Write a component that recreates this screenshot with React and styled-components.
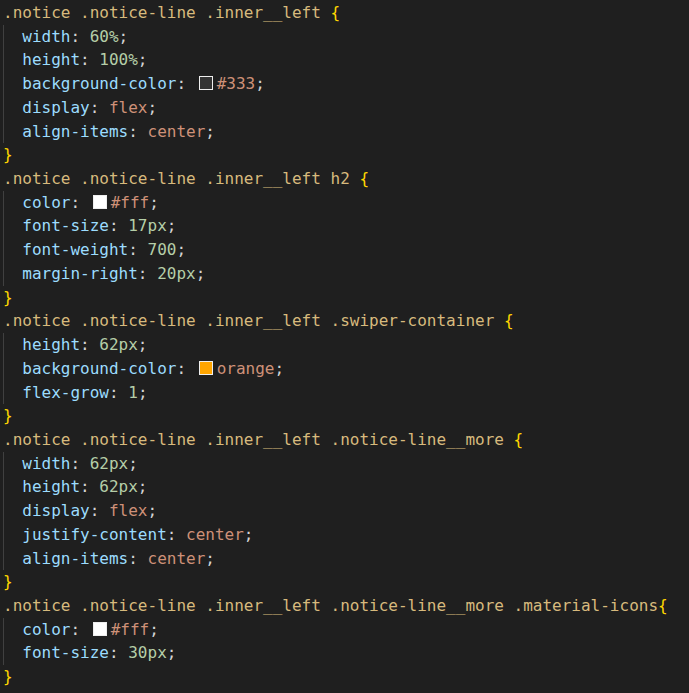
import styled, { createGlobalStyle } from "styled-components";

const GlobalStyle = createGlobalStyle`
  html, body {
    margin: 0;
    padding: 0;
    background: #1f1f1f;
  }
`;

// token colours (VS Code dark)
const colors = {
  sel: "#d7ba7d",
  prop: "#9cdcfe",
  num: "#b5cea8",
  val: "#ce9178",
  punc: "#d4d4d4",
  brace: "#ffd700",
};

const rules = [
  {
    selector: ".notice .notice-line .inner__left ",
    decls: [
      ["width", [["num", "60%"]]],
      ["height", [["num", "100%"]]],
      ["background-color", [["swatch", "#333"], ["val", "#333"]]],
      ["display", [["val", "flex"]]],
      ["align-items", [["val", "center"]]],
    ],
  },
  {
    selector: ".notice .notice-line .inner__left h2 ",
    decls: [
      ["color", [["swatch", "#fff"], ["val", "#fff"]]],
      ["font-size", [["num", "17px"]]],
      ["font-weight", [["num", "700"]]],
      ["margin-right", [["num", "20px"]]],
    ],
  },
  {
    selector: ".notice .notice-line .inner__left .swiper-container ",
    decls: [
      ["height", [["num", "62px"]]],
      ["background-color", [["swatch", "orange"], ["val", "orange"]]],
      ["flex-grow", [["num", "1"]]],
    ],
  },
  {
    selector: ".notice .notice-line .inner__left .notice-line__more ",
    decls: [
      ["width", [["num", "62px"]]],
      ["height", [["num", "62px"]]],
      ["display", [["val", "flex"]]],
      ["justify-content", [["val", "center"]]],
      ["align-items", [["val", "center"]]],
    ],
  },
  {
    selector: ".notice .notice-line .inner__left .notice-line__more .material-icons",
    decls: [
      ["color", [["swatch", "#fff"], ["val", "#fff"]]],
      ["font-size", [["num", "30px"]]],
    ],
  },
];

const App = () => {
  return (
    <>
      <GlobalStyle />
      <Editor>
        {rules.map((rule, i) => (
          <Rule key={i}>
            <Line>
              <Token $kind="sel">{rule.selector}</Token>
              <Token $kind="brace">{"{"}</Token>
            </Line>
            <Body>
              {rule.decls.map(([prop, parts], j) => (
                <Line key={j}>
                  <Token $kind="prop">{prop}</Token>
                  <Token $kind="punc">{": "}</Token>
                  {parts.map(([kind, text], k) =>
                    kind === "swatch" ? (
                      <Swatch key={k} $color={text} />
                    ) : (
                      <Token key={k} $kind={kind}>
                        {text}
                      </Token>
                    )
                  )}
                  <Token $kind="punc">;</Token>
                </Line>
              ))}
            </Body>
            <Line>
              <Token $kind="brace">{"}"}</Token>
            </Line>
          </Rule>
        ))}
      </Editor>
    </>
  );
};

const Editor = styled.div`
  width: 689px;
  height: 693px;
  overflow: hidden;
  padding: 1px 0 0 3px;
  box-sizing: border-box;
  background: #1f1f1f;
  font-family: "DejaVu Sans Mono", "Liberation Mono", monospace;
  font-size: 16px;
  color: #d4d4d4;
`;

const Rule = styled.div`
  display: flex;
  flex-direction: column;
`;

const Line = styled.div`
  height: 23.72px;
  line-height: 23.72px;
  white-space: pre;
`;

const Body = styled.div`
  border-left: 1px solid #404040;
  padding-left: calc(2ch - 1px);
`;

const Token = styled.span`
  color: ${(p) => colors[p.$kind]};
`;

const Swatch = styled.span`
  display: inline-block;
  width: 12px;
  height: 12px;
  margin: 0 4px 0 3px;
  border: 1px solid #eeeeee;
  background: ${(p) => p.$color};
  vertical-align: -1px;
`;

export default App;
